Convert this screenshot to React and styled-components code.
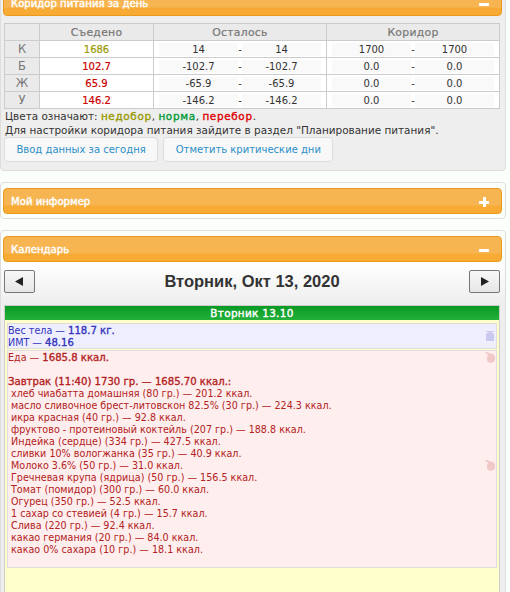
import React from "react";
import styled, { createGlobalStyle, css } from "styled-components";

const Global = createGlobalStyle`
  html, body { margin: 0; padding: 0; background: #fbfffb; }
  body { width: 510px; height: 592px; overflow: hidden; font-family: "DejaVu Sans", Verdana, sans-serif; font-size: 10.45px; }
`;
const Page = styled.div`
  width: 506px;
  margin-top: -16px;
  display: flex;
  flex-direction: column;
  gap: 11px;
`;
const Panel = styled.section`
  background: ${p => p.$bg || "#fbfffb"};
  border: 1px solid #ddd;
  border-radius: 4px;
  padding: 5px 0 ${p => p.$pb ?? 4}px;
  display: flex;
  flex-direction: column;
`;
const Header = styled.header`
  height: 24px;
  margin: 0 3px 0 2px;
  border: 1px solid #ea9a1c;
  border-radius: 4px;
  background: linear-gradient(#f7b552 0 66%, #f7ab35 72% 100%);
  display: flex;
  align-items: center;
  justify-content: space-between;
  padding: 0 12px 0 7px;
  color: #fff;
  font-size: 10.1px;
  -webkit-text-stroke: 0.4px #fff;
`;
const Sign = styled.span`
  position: relative;
  width: 10px;
  height: 3px;
  margin-top: 2px;
  background: #fff;
  &::after {
    content: "";
    display: ${p => p.$plus ? "block" : "none"};
    position: absolute;
    left: 3.5px;
    top: -3.5px;
    width: 3px;
    height: 10px;
    background: #fff;
  }
`;
const Table = styled.table`
  border-collapse: collapse;
  table-layout: fixed;
  width: 496px;
  margin: 7px 0 0 3px;
  background: #fff;
`;
const cellHead = css`
  border: 1px solid #ccc;
  background: #eaeaea;
  color: #777;
  font-weight: normal;
  height: 16px;
  padding: 0;
  text-align: center;
`;
const Th = styled.th`
  ${cellHead}
  font-size: 10.8px;
  letter-spacing: 0.3px;
  -webkit-text-stroke: 0.2px #777;
`;
const RowHead = styled.td`
  ${cellHead}
  font-size: 11.5px;
`;
const Td = styled.td`
  border: 1px solid #ccc;
  height: 16px;
  padding: 0;
  text-align: center;
  font-size: 10px;
  color: #333;
`;
const Eaten = styled(Td)`
  color: ${p => p.$color};
  -webkit-text-stroke: 0.2px ${p => p.$color};
`;
const Range = styled.div`
  display: grid;
  grid-template-columns: 79px 1fr 79px;
  padding: 0 5px;
  align-items: center;
  line-height: 13px;
  text-align: center;
`;
const Num = styled.span`
  background: #f9f9f9;
  text-align: center;
`;
const Note = styled.p`
  margin: 0 0 0 4px;
  color: #333;
  line-height: 14px;
`;
const Colored = styled.span`
  color: ${p => p.$c};
  letter-spacing: 0.65px;
  -webkit-text-stroke: 0.35px ${p => p.$c};
`;
const Buttons = styled.div`
  display: flex;
  gap: 5px;
  margin: 0 0 4px 3px;
`;
const Btn = styled.button`
  height: 25px;
  border: 1px solid #ddd;
  border-radius: 4px;
  background: #f8f8f8;
  color: #2a8fc8;
  font: inherit;
  font-size: 10px;
  padding: 0 11.5px;
`;
const Nav = styled.div`
  box-sizing: border-box;
  height: 43px;
  background: linear-gradient(#fff, #eee);
  display: flex;
  align-items: center;
  justify-content: space-between;
  padding: 0 5px 4px 3px;
`;
const Arrow = styled.button`
  width: 31px;
  height: 23px;
  border: 1px solid #777;
  border-radius: 2px;
  background: linear-gradient(#f8f8f8, #e6e6e6);
  display: flex;
  align-items: center;
  justify-content: center;
  padding: 0;
`;
const Title = styled.h2`
  margin: 0;
  font: bold 16.5px "Liberation Sans", Arial, sans-serif;
  color: #333;
`;
const Body = styled.div`
  background: #eee;
  padding: 0 5px 0 3px;
  flex: 1;
`;
const Day = styled.div`
  border: 1px solid #ccc;
  background: #ffc;
  height: 400px;
`;
const DayHead = styled.div`
  height: 14px;
  line-height: 14px;
  background: linear-gradient(#0a9a23, #22b03a);
  color: #fff;
  text-align: center;
  letter-spacing: 0.3px;
  -webkit-text-stroke: 0.4px #fff;
`;
const Entry = styled.div`
  position: relative;
  margin: ${p => p.$first ? "3px" : "1px"} 2px 0;
  border: 1px solid #ddd;
  padding: 1px 1px 0 0;
  background: ${p => p.$bg};
  color: ${p => p.$c};
  line-height: 12px;
  height: ${p => p.$h}px;
  box-sizing: border-box;
  font-size: 9.6px;
`;
const Line = styled.div`
  padding-left: ${p => p.$i ? "3px" : "0"};
  white-space: nowrap;
  min-height: 12px;
`;
const Strong = styled.span`
  font-size: 10.1px;
  -webkit-text-stroke: 0.35px;
`;
const Mark = styled.svg`
  position: absolute;
  right: ${p => p.$right}px;
  top: ${p => p.$top}px;
  width: ${p => p.$w}px;
  height: ${p => p.$hh}px;
`;

const Weight = () => (
  <Mark $top={7} $right={2} $w={8} $hh={10} viewBox="0 0 8 10"><path d="M0 0h8v1H5.500v1H7l1 1v7H0V3l1-1h1.500V1H0z" fill="#c9c9ee" /></Mark>
);
const Apple = ({ top }) => (
  <Mark $top={top} $right={1} $w={10} $hh={11} viewBox="0 0 10 11"><path d="M0 0c2 0 4 .5 5 1.500 1.500-.3 4 .5 4.800 2.500.6 2 .4 5-1.300 6-1.500 1-4 1-5.300 0C1.800 9 1.500 6 2.300 4.500 2.700 4 3 3.500 3.500 3 2.300 2.500 1 1.500 0 0z" fill="#f0c8c8" /></Mark>
);

const rows = [
  ["К", "1686", "#999900", "14", "14", "1700", "1700"],
  ["Б", "102.7", "#cc0000", "-102.7", "-102.7", "0.0", "0.0"],
  ["Ж", "65.9", "#cc0000", "-65.9", "-65.9", "0.0", "0.0"],
  ["У", "146.2", "#cc0000", "-146.2", "-146.2", "0.0", "0.0"],
];
const foods = [
  "хлеб чиабатта домашняя (80 гр.) — 201.2 ккал.",
  "масло сливочное брест-литовскон 82.5% (30 гр.) — 224.3 ккал.",
  "икра красная (40 гр.) — 92.8 ккал.",
  "фруктово - протеиновый коктейль (207 гр.) — 188.8 ккал.",
  "Индейка (сердце) (334 гр.) — 427.5 ккал.",
  "сливки 10% вологжанка (35 гр.) — 40.9 ккал.",
  "Молоко 3.6% (50 гр.) — 31.0 ккал.",
  "Гречневая крупа (ядрица) (50 гр.) — 156.5 ккал.",
  "Томат (помидор) (300 гр.) — 60.0 ккал.",
  "Огурец (350 гр.) — 52.5 ккал.",
  "1 сахар со стевией (4 гр.) — 15.7 ккал.",
  "Слива (220 гр.) — 92.4 ккал.",
  "какао германия (20 гр.) — 84.0 ккал.",
  "какао 0% сахара (10 гр.) — 18.1 ккал.",
];

export default function App() {
  return (
    <Page>
      <Global />
      <Panel $bg="#eee">
        <Header>Коридор питания за день<Sign /></Header>
        <Table>
          <colgroup><col width="35" /><col width="114" /><col width="173" /><col width="173" /></colgroup>
          <thead>
            <tr><Th /><Th>Съедено</Th><Th>Осталось</Th><Th>Коридор</Th></tr>
          </thead>
          <tbody>
            {rows.map(r => (
              <tr key={r[0]}>
                <RowHead>{r[0]}</RowHead>
                <Eaten $color={r[2]}>{r[1]}</Eaten>
                <Td><Range><Num>{r[3]}</Num><span>-</span><Num>{r[4]}</Num></Range></Td>
                <Td><Range><Num>{r[5]}</Num><span>-</span><Num>{r[6]}</Num></Range></Td>
              </tr>
            ))}
          </tbody>
        </Table>
        <Note>Цвета означают: <Colored $c="#999900">недобор</Colored>, <Colored $c="#009933">норма</Colored>, <Colored $c="#dd0000">перебор</Colored>.</Note>
        <Note>Для настройки коридора питания зайдите в раздел "Планирование питания".</Note>
        <Buttons><Btn>Ввод данных за сегодня</Btn><Btn>Отметить критические дни</Btn></Buttons>
      </Panel>
      <Panel>
        <Header>Мой информер<Sign $plus /></Header>
      </Panel>
      <Panel $pb={0}>
        <Header>Календарь<Sign /></Header>
        <Nav>
          <Arrow aria-label="Назад"><svg width="9" height="9" viewBox="0 0 9 9"><path d="M8 0v9L0 4.500z" fill="#222" /></svg></Arrow>
          <Title>Вторник, Окт 13, 2020</Title>
          <Arrow aria-label="Вперёд"><svg width="9" height="9" viewBox="0 0 9 9"><path d="M1 0v9l8-4.500z" fill="#222" /></svg></Arrow>
        </Nav>
        <Body>
          <Day>
            <DayHead>Вторник 13.10</DayHead>
            <Entry $first $bg="#eef" $c="#3333bb" $h={26}>
              <Line>Вес тела — <Strong>118.7 кг.</Strong></Line>
              <Line>ИМТ — <Strong>48.16</Strong></Line>
              <Weight />
            </Entry>
            <Entry $bg="#fee" $c="#b22222" $h={218}>
              <Line>Еда — <Strong>1685.8 ккал.</Strong></Line>
              <Line />
              <Line><Strong>Завтрак (11:40) 1730 гр. — 1685.70 ккал.:</Strong></Line>
              {foods.map(f => <Line $i key={f}>{f}</Line>)}
              <Apple top={1} />
              <Apple top={109} />
            </Entry>
          </Day>
        </Body>
      </Panel>
    </Page>
  );
}
